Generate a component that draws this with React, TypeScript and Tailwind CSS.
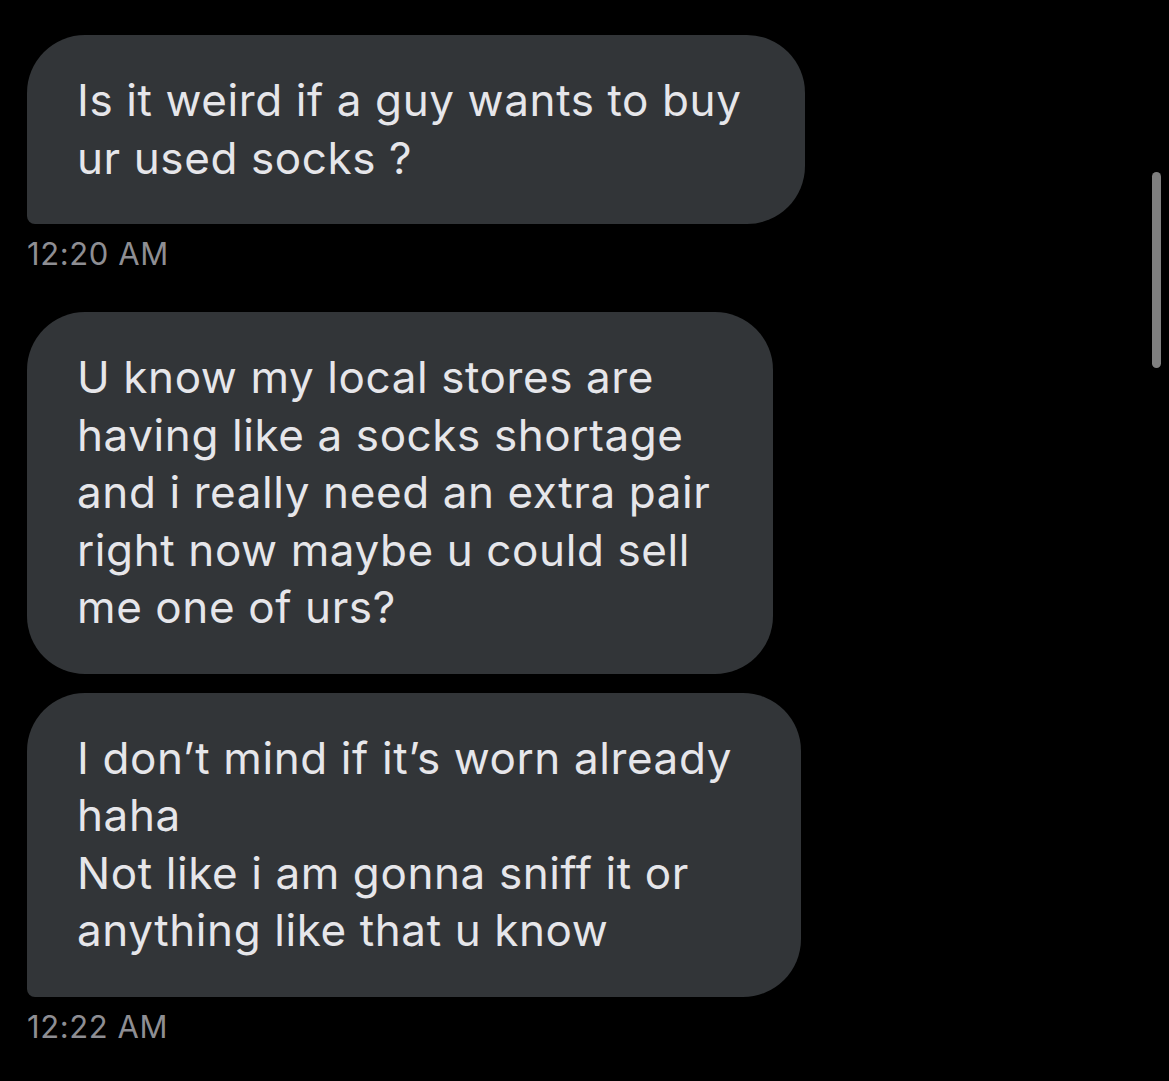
import React from "react";

type Msg = {
  lines: string[];
  width: string;
  corners: string;
  gap: string;
};

const font = { fontFamily: "Inter, 'Noto Sans', sans-serif" };

function Bubble({ lines, width, corners, gap }: Msg) {
  return (
    <div
      className={`${width} ${corners} ${gap} bg-[#323538] pl-[50px] pr-[40px] py-[37px] text-[44px] leading-[57.5px] text-[#e6e6ea] tracking-[0.6px]`}
    >
      {lines.map((l, i) => (
        <div key={i} className="whitespace-nowrap">
          {l}
        </div>
      ))}
    </div>
  );
}

function Stamp({ children }: { children: React.ReactNode }) {
  return (
    <div className="mt-[12px] text-[31px] leading-[36px] tracking-[0.6px] text-[#8e8e93]">{children}</div>
  );
}

export default function App() {
  return (
    <div className="relative h-[1081px] w-[1169px] overflow-hidden bg-black" style={font}>
      <div className="flex flex-col items-start pl-[27px] pt-[35px]">
        <Bubble
          lines={["Is it weird if a guy wants to buy", "ur used socks ?"]}
          width="w-[778px]"
          corners="rounded-[58px] rounded-bl-[8px]"
          gap=""
        />
        <Stamp>12:20 AM</Stamp>

        <Bubble
          lines={[
            "U know my local stores are",
            "having like a socks shortage",
            "and i really need an extra pair",
            "right now maybe u could sell",
            "me one of urs?",
          ]}
          width="w-[746px]"
          corners="rounded-[58px]"
          gap="mt-[40px]"
        />
        <Bubble
          lines={[
            "I don\u2019t mind if it\u2019s worn already",
            "haha",
            "Not like i am gonna sniff it or",
            "anything like that u know",
          ]}
          width="w-[774px]"
          corners="rounded-[58px] rounded-bl-[8px]"
          gap="mt-[19px]"
        />
        <Stamp>12:22 AM</Stamp>
      </div>

      {/* scroll indicator */}
      <div className="absolute left-[1152px] top-[172px] h-[196px] w-[9px] rounded-full bg-[#7f7f7f]" />
    </div>
  );
}
